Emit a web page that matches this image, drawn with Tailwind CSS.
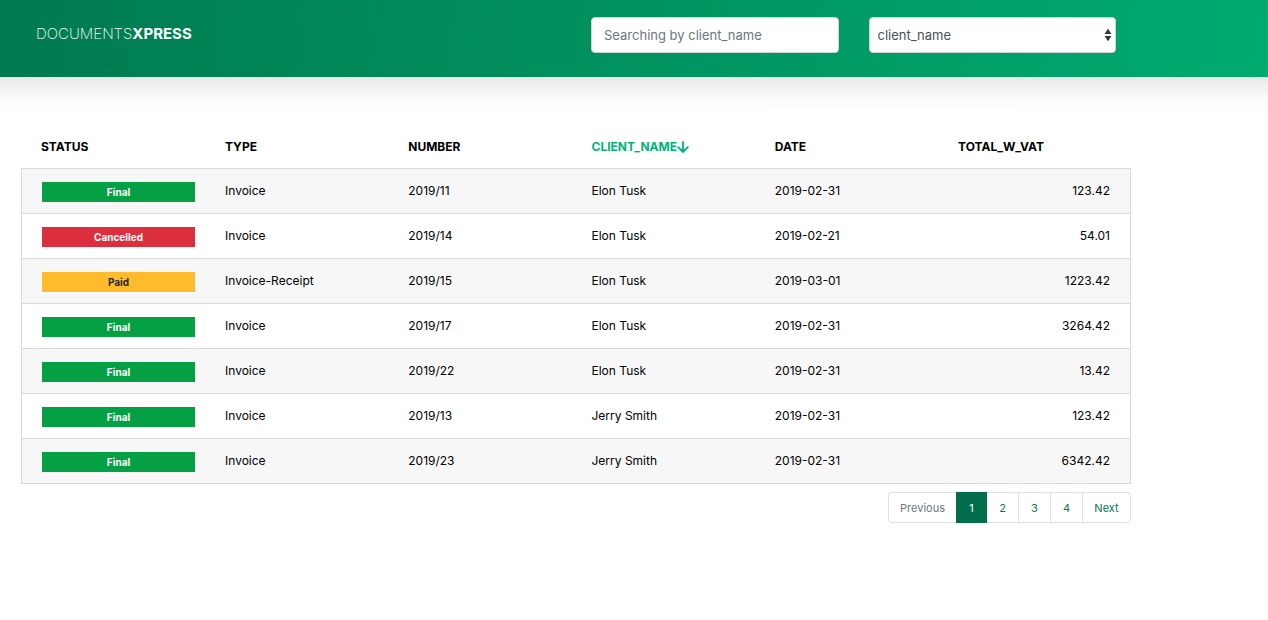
<!DOCTYPE html>
<html lang="en">
<head>
<meta charset="utf-8">
<meta name="viewport" content="width=device-width, initial-scale=1">
<title>DocumentsXpress</title>
<script src="https://cdn.jsdelivr.net/npm/@tailwindcss/browser@4"></script>
</head>
<body class="min-h-screen bg-white font-['Inter','Liberation_Sans',sans-serif] text-xs text-black">
<header class="relative bg-linear-[94deg,#007a50,#00ab70] px-9 pt-[17px] pb-6 after:pointer-events-none after:absolute after:inset-x-0 after:top-full after:h-9 after:bg-linear-[180deg,#e8e8e8,#f1f1f1_30%,#fafafa_60%,#ffffff]">
  <div class="grid max-w-[1080px] grid-cols-4 gap-[30px]">
    <a href="#" class="col-span-2 pt-[5px] text-[15px] leading-6 font-extralight text-white">DOCUMENTS<b class="font-bold">XPRESS</b></a>
    <input type="text" aria-label="Search" placeholder="Searching by client_name" class="h-9 w-full rounded border border-[#ced4da] bg-white px-3 text-[13px] text-[#495057] placeholder:text-[#6c757d]">
    <div class="relative">
      <select aria-label="Search field" class="h-9 w-full appearance-none rounded border border-[#ced4da] bg-white px-2 pt-px text-[13px] text-[#495057]">
        <option>client_name</option>
        <option>status</option>
        <option>type</option>
        <option>number</option>
        <option>date</option>
        <option>total_w_vat</option>
      </select>
      <svg class="pointer-events-none absolute top-3 right-1 h-3 w-2" viewBox="0 0 8 12" fill="#343a40" aria-hidden="true"><path d="M4 -.3 7.500 5H.5zM.5 7h7L4 12.300z"/></svg>
    </div>
  </div>
</header>
<main class="mr-4 ml-[21px] max-w-[1110px] pt-12">
  <table class="w-full table-fixed border-separate border-spacing-0 text-left">
    <colgroup><col class="w-[189px]"><col><col><col><col><col class="w-[188px]"></colgroup>
    <thead>
      <tr class="h-[43px] font-bold">
        <th scope="col" class="pl-5">STATUS</th>
        <th scope="col" class="px-[15px]">TYPE</th>
        <th scope="col" class="px-[15px]">NUMBER</th>
        <th scope="col" class="px-[15px] text-[#00b377]"><span class="flex items-center">CLIENT_NAME<svg class="h-3 w-3 shrink-0" viewBox="0 0 12 12" fill="none" stroke="currentColor" stroke-width="1.800" stroke-linecap="round" stroke-linejoin="round" aria-hidden="true"><path d="M6 1v10M1.200 6.200 6 11l4.800-4.800"/></svg></span></th>
        <th scope="col" class="px-[15px]">DATE</th>
        <th scope="col" class="pr-5 pl-[15px]">TOTAL_W_VAT</th>
      </tr>
    </thead>
    <tbody class="[&_td]:h-[45px] [&_td]:border-t [&_td]:border-[#dadada] [&_td]:px-[15px] [&_td:first-child]:border-l [&_td:first-child]:pl-5 [&_td:first-child]:pt-0.5 [&_td:last-child]:border-r [&_td:last-child]:pr-5 [&_td:last-child]:text-right [&_tr:last-child_td]:border-b [&_tr:last-child_td]:h-[46px] [&_tr:nth-child(odd)]:bg-[#f7f7f7] [&_td>span]:block [&_td>span]:h-5 [&_td>span]:text-center [&_td>span]:text-[10px] [&_td>span]:leading-5 [&_td>span]:font-bold">
      <tr><td><span class="bg-[#06a044] text-white">Final</span></td><td>Invoice</td><td>2019/11</td><td>Elon Tusk</td><td>2019-02-31</td><td>123.42</td></tr>
      <tr><td><span class="bg-[#dc2f3e] text-white">Cancelled</span></td><td>Invoice</td><td>2019/14</td><td>Elon Tusk</td><td>2019-02-21</td><td>54.01</td></tr>
      <tr><td><span class="bg-[#ffbb2c] text-[#212529]">Paid</span></td><td>Invoice-Receipt</td><td>2019/15</td><td>Elon Tusk</td><td>2019-03-01</td><td>1223.42</td></tr>
      <tr><td><span class="bg-[#06a044] text-white">Final</span></td><td>Invoice</td><td>2019/17</td><td>Elon Tusk</td><td>2019-02-31</td><td>3264.42</td></tr>
      <tr><td><span class="bg-[#06a044] text-white">Final</span></td><td>Invoice</td><td>2019/22</td><td>Elon Tusk</td><td>2019-02-31</td><td>13.42</td></tr>
      <tr><td><span class="bg-[#06a044] text-white">Final</span></td><td>Invoice</td><td>2019/13</td><td>Jerry Smith</td><td>2019-02-31</td><td>123.42</td></tr>
      <tr><td><span class="bg-[#06a044] text-white">Final</span></td><td>Invoice</td><td>2019/23</td><td>Jerry Smith</td><td>2019-02-31</td><td>6342.42</td></tr>
    </tbody>
  </table>
  <nav aria-label="Pagination" class="mt-2 flex justify-end text-[11px] text-[#007a4d] *:h-[31px] *:pt-0.5">
    <button type="button" disabled class="w-[68px] rounded-l border border-r-0 border-[#dee2e6] text-[#6c757d]">Previous</button>
    <a href="#" aria-current="page" class="flex w-[31px] items-center justify-center bg-[#006e4a] text-white">1</a>
    <a href="#" class="flex w-8 items-center justify-center border-y border-r border-[#dee2e6]">2</a>
    <a href="#" class="flex w-8 items-center justify-center border-y border-r border-[#dee2e6]">3</a>
    <a href="#" class="flex w-8 items-center justify-center border-y border-r border-[#dee2e6]">4</a>
    <a href="#" class="flex w-12 items-center justify-center rounded-r border-y border-r border-[#dee2e6]">Next</a>
  </nav>
</main>
</body>
</html>
